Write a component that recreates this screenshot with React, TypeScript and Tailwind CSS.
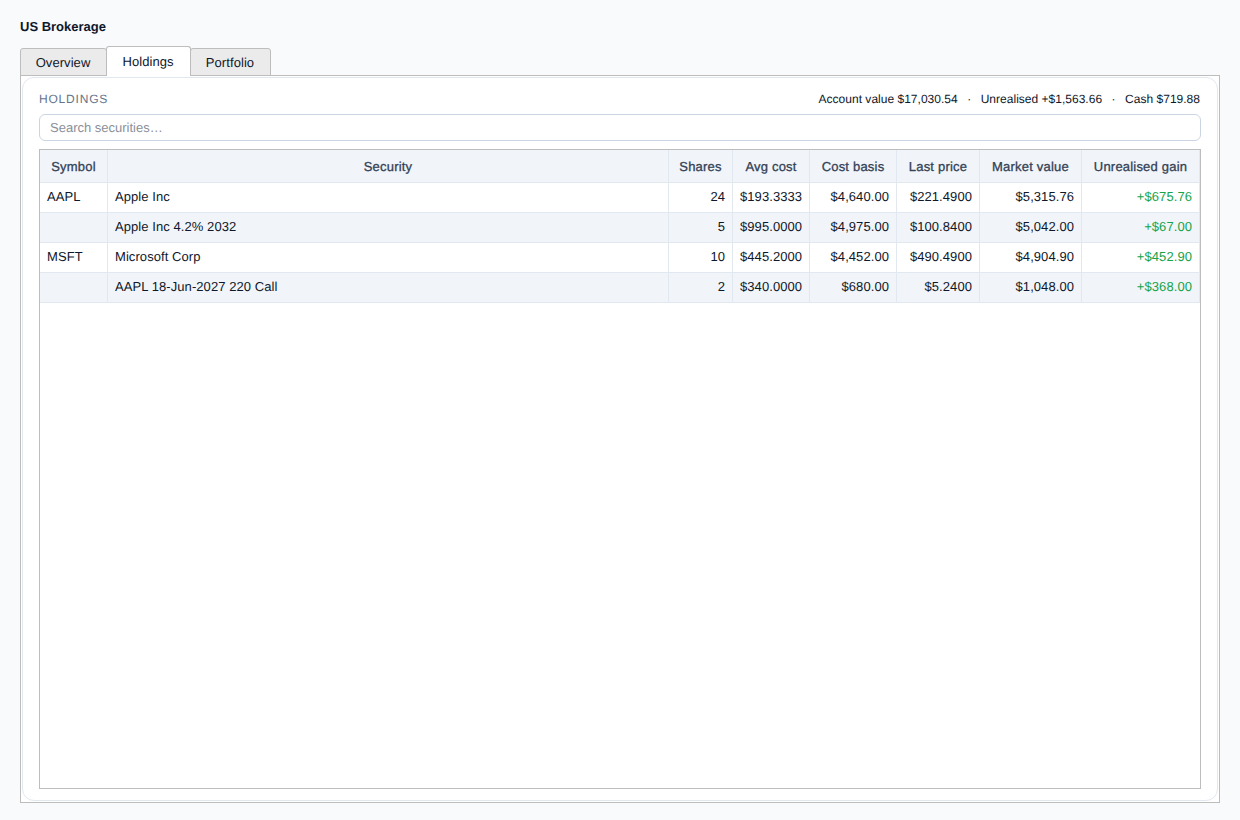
const tabs = [
  { label: "Overview", active: false, width: "w-[87px]" },
  { label: "Holdings", active: true, width: "w-[85px]" },
  { label: "Portfolio", active: false, width: "w-[81px]" },
];

const columns = [
  { label: "Symbol", width: "w-[68px]" },
  { label: "Security", width: "w-[561px]" },
  { label: "Shares", width: "w-[64px]" },
  { label: "Avg cost", width: "w-[77px]" },
  { label: "Cost basis", width: "w-[87px]" },
  { label: "Last price", width: "w-[83px]" },
  { label: "Market value", width: "w-[102px]" },
  { label: "Unrealised gain", width: "w-[118px]" },
];

const rows = [
  { symbol: "AAPL", security: "Apple Inc", shares: "24", avg: "$193.3333", basis: "$4,640.00", last: "$221.4900", value: "$5,315.76", gain: "+$675.76" },
  { symbol: "", security: "Apple Inc 4.2% 2032", shares: "5", avg: "$995.0000", basis: "$4,975.00", last: "$100.8400", value: "$5,042.00", gain: "+$67.00" },
  { symbol: "MSFT", security: "Microsoft Corp", shares: "10", avg: "$445.2000", basis: "$4,452.00", last: "$490.4900", value: "$4,904.90", gain: "+$452.90" },
  { symbol: "", security: "AAPL 18-Jun-2027 220 Call", shares: "2", avg: "$340.0000", basis: "$680.00", last: "$5.2400", value: "$1,048.00", gain: "+$368.00" },
];

const App = () => {
  const cell = "h-[30px] px-[7px] pt-0 pb-[2px] border-r border-b border-[#e2e8f0] tracking-[0.07px]";

  return (
    <div className="h-[820px] bg-[#f8fafc] px-5 pt-[19px] font-['Liberation_Sans',Arial,sans-serif] text-[13px] leading-[15px] text-[#0f172a] overflow-hidden [text-rendering:geometricPrecision]">
      <h1 className="h-[27px] text-[13px] leading-[15px] font-bold">US Brokerage</h1>

      {/* Tabs */}
      <div className="flex h-[30px] items-end relative z-10">
        {tabs.map((tab) => (
          <div
            key={tab.label}
            className={`${tab.width} -mr-px flex items-center justify-center rounded-t-[3px] border border-[#bdbdbd] tracking-[0.07px] ${
              tab.active
                ? "h-[30px] bg-white border-b-0 relative z-10 pb-[1px] pr-[1px]"
                : "h-[28px] bg-[#ebebeb] pr-[1px]"
            }`}
          >
            {tab.label}
          </div>
        ))}
      </div>

      {/* Tab pane */}
      <div className="h-[728px] border border-[#bdbdbd] -mt-px bg-white p-px">
        <div className="h-[724px] rounded-[12px] border border-[#e2e8f0] bg-white px-4 pt-[12px]">
          <div className="flex h-[18px] items-center justify-between pr-[1px]">
            <span className="text-[12px] tracking-[0.8px] text-[#64748b]">HOLDINGS</span>
            <div className="flex text-[12px] text-[#0f172a] tracking-[0.015px]">
              <span>Account value $17,030.54</span>
              <span className="w-[23px] text-center">·</span>
              <span>Unrealised +$1,563.66</span>
              <span className="w-[23px] text-center">·</span>
              <span>Cash $719.88</span>
            </div>
          </div>

          <div className="mt-[6px] flex h-[27px] items-center rounded-[6px] border border-[#cbd5e1] bg-white px-[10px] text-[13px] text-[#8a8f98]">
            Search securities…
          </div>

          <div className="mt-2 h-[640px] border border-[#bdbdbd] bg-white">
            <table className="w-[1160px] table-fixed border-separate border-spacing-0">
              <colgroup>
                {columns.map((col) => (
                  <col key={col.label} className={col.width} />
                ))}
              </colgroup>
              <thead>
                <tr>
                  {columns.map((col) => (
                    <th
                      key={col.label}
                      className="h-[33px] border-r border-b border-[#e2e8f0] bg-[#f1f5f9] p-0 text-center font-normal tracking-[0.2px] text-[#334155] [-webkit-text-stroke:0.3px_#334155]"
                    >
                      {col.label}
                    </th>
                  ))}
                </tr>
              </thead>
              <tbody>
                {rows.map((row, i) => (
                  <tr key={row.security} className={i % 2 === 1 ? "bg-[#f1f5f9]" : "bg-white"}>
                    <td className={cell}>{row.symbol}</td>
                    <td className={cell}>{row.security}</td>
                    <td className={`${cell} text-right`}>{row.shares}</td>
                    <td className={`${cell} text-right`}>{row.avg}</td>
                    <td className={`${cell} text-right`}>{row.basis}</td>
                    <td className={`${cell} text-right`}>{row.last}</td>
                    <td className={`${cell} text-right`}>{row.value}</td>
                    <td className={`${cell} text-right text-[#16a34a]`}>{row.gain}</td>
                  </tr>
                ))}
              </tbody>
            </table>
          </div>
        </div>
      </div>
    </div>
  );
};

export default App;
